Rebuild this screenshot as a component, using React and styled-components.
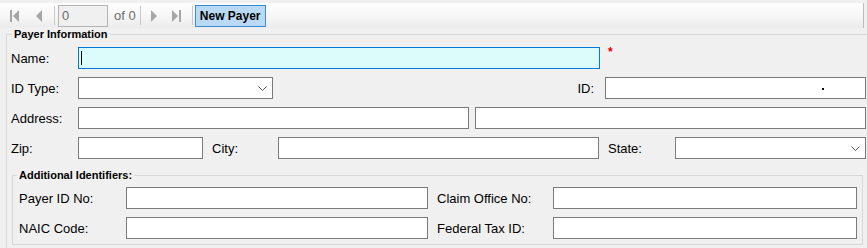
import React from 'react'
import styled, { createGlobalStyle } from 'styled-components'

const GlobalStyle = createGlobalStyle`
  html, body {
    margin: 0;
    padding: 0;
    background: #f0f0f0;
    font-family: "Liberation Sans", Arial, sans-serif;
    overflow: hidden;
  }
`

export const Page = styled.div`
  width: 867px;
  height: 248px;
  overflow: hidden;
  background: #f0f0f0;
`

export const Toolbar = styled.div`
  display: flex;
  align-items: center;
  height: 25px;
  margin: 3px 3px 0 0;
  padding-left: 3px;
  background: linear-gradient(#fdfdfd, #f7f7f7 50%, #ebebeb);
  border-right: 1px solid #bcbcbc;
`

export const NavButton = styled.div`
  display: flex;
  align-items: center;
  justify-content: center;
  width: ${p => p.$w || 24}px;
  height: 22px;
`

export const Separator = styled.div`
  width: 1px;
  height: 19px;
  background: #c8c8c8;
  margin: 0 ${p => p.$r || 3}px 0 ${p => p.$l || 3}px;
`

export const PositionBox = styled.div`
  box-sizing: border-box;
  width: 50px;
  height: 22px;
  border: 1px solid #b4b4b4;
  background: #f0f0f0;
  color: #6d6d6d;
  font-size: 13px;
  line-height: 20px;
  padding-left: 3px;
`

export const OfText = styled.span`
  color: #6d6d6d;
  font-size: 13px;
  margin: 0 0 0 6px;
`

export const NewButton = styled.div`
  box-sizing: border-box;
  width: 71px;
  height: 22px;
  border: 1px solid #3a8ad4;
  background: #b9d9f4;
  font-size: 12px;
  font-weight: bold;
  line-height: 20px;
  text-align: center;
  color: #000;
`

export const Group = styled.div`
  position: relative;
  box-sizing: border-box;
  border: 1px solid #d8d8d8;
  margin: ${p => p.$margin};
  padding: ${p => p.$padding};
  width: ${p => p.$width}px;
  display: flex;
  flex-direction: column;
  gap: 8px;
`

export const GroupTitle = styled.span`
  position: absolute;
  top: -8px;
  left: ${p => p.$left}px;
  padding: 0 2px;
  background: #f0f0f0;
  font-size: 11px;
  font-weight: bold;
  line-height: 14px;
  color: #000;
`

export const Row = styled.div`
  display: flex;
  align-items: center;
  height: 22px;
`

export const Label = styled.span`
  flex: none;
  width: ${p => p.$w}px;
  margin-left: ${p => p.$ml || 0}px;
  text-align: ${p => p.$align || 'left'};
  padding-right: ${p => p.$pr || 0}px;
  box-sizing: border-box;
  font-size: 13px;
  color: #000;
  white-space: nowrap;
`

export const TextBox = styled.div`
  position: relative;
  flex: none;
  box-sizing: border-box;
  width: ${p => p.$w}px;
  height: 22px;
  margin-left: ${p => p.$ml || 0}px;
  border: 1px solid ${p => (p.$focused ? '#0078d7' : '#7a7a7a')};
  background: ${p => (p.$focused ? '#dcfcfc' : '#fff')};
`

export const Caret = styled.span`
  position: absolute;
  left: 2px;
  top: 3px;
  width: 1px;
  height: 14px;
  background: #000;
`

export const Dot = styled.span`
  position: absolute;
  left: ${p => p.$x}px;
  top: 10px;
  width: 2px;
  height: 2px;
  background: #000;
`

export const ComboBox = styled(TextBox)`
  display: flex;
  align-items: center;
  justify-content: flex-end;
  padding-right: 5px;
`

export const Required = styled.span`
  align-self: flex-start;
  margin: -1px 0 0 8px;
  color: #e00000;
  font-size: 12px;
  font-weight: bold;
  line-height: 12px;
`

const grey = '#a6a6a6'

const FirstIcon = () => (
  <svg width="10" height="12" viewBox="0 0 10 12">
    <rect x="0" y="0" width="2" height="12" fill={grey} />
    <path d="M9 0 L3 6 L9 12 Z" fill={grey} />
  </svg>
)
const PrevIcon = () => (
  <svg width="7" height="12" viewBox="0 0 7 12">
    <path d="M6 0 L0 6 L6 12 Z" fill={grey} />
  </svg>
)
const NextIcon = () => (
  <svg width="7" height="12" viewBox="0 0 7 12">
    <path d="M1 0 L7 6 L1 12 Z" fill={grey} />
  </svg>
)
const LastIcon = () => (
  <svg width="10" height="12" viewBox="0 0 10 12">
    <path d="M1 0 L7 6 L1 12 Z" fill={grey} />
    <rect x="8" y="0" width="2" height="12" fill={grey} />
  </svg>
)
const Chevron = () => (
  <svg width="9" height="5" viewBox="0 0 9 5">
    <path d="M0.5 0.5 L4.5 4.5 L8.5 0.5" fill="none" stroke="#555" strokeWidth="1" />
  </svg>
)

const Combo = ({ w, ml }) => (
  <ComboBox $w={w} $ml={ml}>
    <Chevron />
  </ComboBox>
)

export default function App() {
  return (
    <Page>
      <GlobalStyle />
      <Toolbar>
        <NavButton><FirstIcon /></NavButton>
        <NavButton><PrevIcon /></NavButton>
        <Separator />
        <PositionBox>0</PositionBox>
        <OfText>of 0</OfText>
        <Separator $l={4} $r={2} />
        <NavButton $w={22}><NextIcon /></NavButton>
        <NavButton $w={22}><LastIcon /></NavButton>
        <Separator $l={5} $r={2} />
        <NewButton>New Payer</NewButton>
      </Toolbar>

      <Group $margin="6px 0 0 6px" $padding="12px 0 8px 4px" $width={862}>
        <GroupTitle $left={5}>Payer Information</GroupTitle>
        <Row>
          <Label $w={67}>Name:</Label>
          <TextBox $w={522} $focused>
            <Caret />
          </TextBox>
          <Required>*</Required>
        </Row>
        <Row>
          <Label $w={67}>ID Type:</Label>
          <Combo w={195} />
          <Label $w={332} $align="right" $pr={11}>ID:</Label>
          <TextBox $w={261}>
            <Dot $x={216} />
          </TextBox>
        </Row>
        <Row>
          <Label $w={67}>Address:</Label>
          <TextBox $w={391} />
          <TextBox $w={391} $ml={6} />
        </Row>
        <Row>
          <Label $w={67}>Zip:</Label>
          <TextBox $w={125} />
          <Label $w={66} $ml={9}>City:</Label>
          <TextBox $w={321} />
          <Label $w={67} $ml={9}>State:</Label>
          <Combo w={191} />
        </Row>

        <Group $margin="8px 0 0 1px" $padding="11px 0 5px 6px" $width={851}>
          <GroupTitle $left={4}>Additional Identifiers:</GroupTitle>
          <Row>
            <Label $w={107}>Payer ID No:</Label>
            <TextBox $w={302} />
            <Label $w={116} $ml={9}>Claim Office No:</Label>
            <TextBox $w={304} />
          </Row>
          <Row>
            <Label $w={107}>NAIC Code:</Label>
            <TextBox $w={302} />
            <Label $w={116} $ml={9}>Federal Tax ID:</Label>
            <TextBox $w={304} />
          </Row>
        </Group>
      </Group>
    </Page>
  )
}
